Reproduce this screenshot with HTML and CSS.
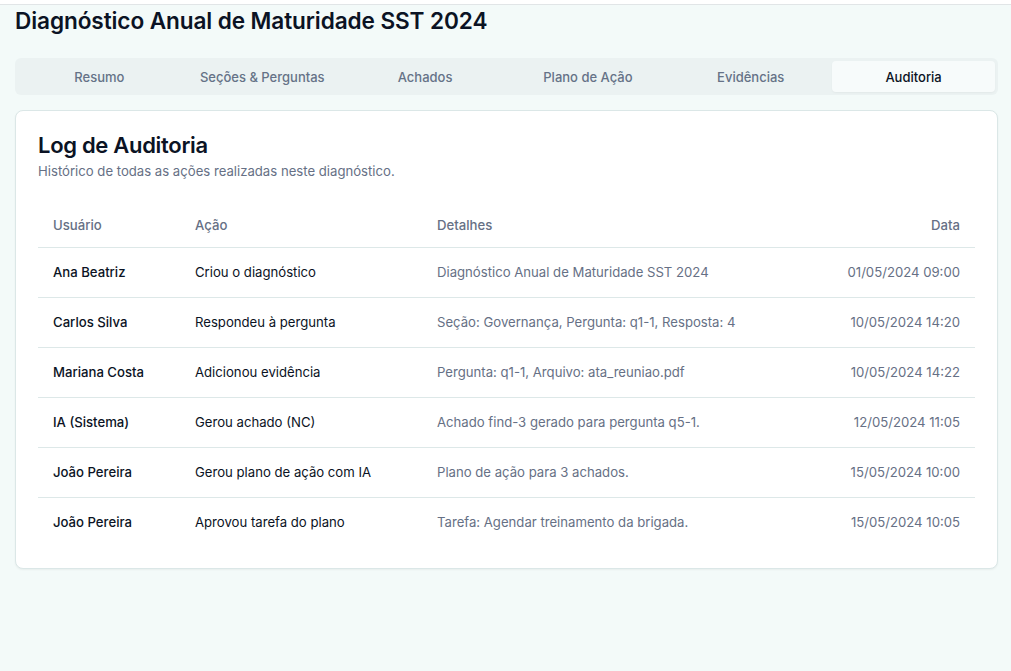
FILE: index.html
```html
<!DOCTYPE html>
<html lang="pt-BR">
<head>
<meta charset="utf-8">
<title>Log de Auditoria</title>
<link rel="stylesheet" href="styles.css">
</head>
<body>
<div class="topbar"></div>
<main class="page">
  <h1 class="page-title">Diagnóstico Anual de Maturidade SST 2024</h1>
  <nav class="tabs">
    <div class="tab">Resumo</div>
    <div class="tab">Seções &amp; Perguntas</div>
    <div class="tab">Achados</div>
    <div class="tab">Plano de Ação</div>
    <div class="tab">Evidências</div>
    <div class="tab active">Auditoria</div>
  </nav>
  <section class="card">
    <div class="card-header">
      <h2 class="card-title">Log de Auditoria</h2>
      <p class="card-desc">Histórico de todas as ações realizadas neste diagnóstico.</p>
    </div>
    <div class="card-content">
      <table class="log">
        <thead>
          <tr>
            <th class="c-user">Usuário</th>
            <th class="c-action">Ação</th>
            <th class="c-details">Detalhes</th>
            <th class="c-date">Data</th>
          </tr>
        </thead>
        <tbody>
          <tr>
            <td class="c-user">Ana Beatriz</td>
            <td class="c-action">Criou o diagnóstico</td>
            <td class="c-details">Diagnóstico Anual de Maturidade SST 2024</td>
            <td class="c-date">01/05/2024 09:00</td>
          </tr>
          <tr>
            <td class="c-user">Carlos Silva</td>
            <td class="c-action">Respondeu à pergunta</td>
            <td class="c-details">Seção: Governança, Pergunta: q1-1, Resposta: 4</td>
            <td class="c-date">10/05/2024 14:20</td>
          </tr>
          <tr>
            <td class="c-user">Mariana Costa</td>
            <td class="c-action">Adicionou evidência</td>
            <td class="c-details">Pergunta: q1-1, Arquivo: ata_reuniao.pdf</td>
            <td class="c-date">10/05/2024 14:22</td>
          </tr>
          <tr>
            <td class="c-user">IA (Sistema)</td>
            <td class="c-action">Gerou achado (NC)</td>
            <td class="c-details">Achado find-3 gerado para pergunta q5-1.</td>
            <td class="c-date">12/05/2024 11:05</td>
          </tr>
          <tr>
            <td class="c-user">João Pereira</td>
            <td class="c-action">Gerou plano de ação com IA</td>
            <td class="c-details">Plano de ação para 3 achados.</td>
            <td class="c-date">15/05/2024 10:00</td>
          </tr>
          <tr>
            <td class="c-user">João Pereira</td>
            <td class="c-action">Aprovou tarefa do plano</td>
            <td class="c-details">Tarefa: Agendar treinamento da brigada.</td>
            <td class="c-date">15/05/2024 10:05</td>
          </tr>
        </tbody>
      </table>
    </div>
  </section>
</main>
</body>
</html>
```

FILE: styles.css
```css
* { box-sizing: border-box; }
html, body { margin: 0; padding: 0; }
body {
  background: #f3faf9;
  font-family: Inter, "Noto Sans", sans-serif;
  color: #0b1324;
  min-height: 671px;
}
.topbar {
  height: 5px;
  background: #ffffff;
  border-bottom: 1px solid #e1e5e7;
}
.page {
  padding: 0 13px 0 15px;
}
.page-title {
  margin: 0;
  padding-top: 2px;
  font-size: 22.6px;
  line-height: 28px;
  font-weight: 600;
  letter-spacing: -0.1px;
  color: #0b1324;
}
.tabs {
  margin-top: 23px;
  display: grid;
  grid-template-columns: repeat(6, 1fr);
  background: #ebf2f2;
  border-radius: 6px;
  padding: 3px;
  height: 37px;
}
.tab {
  display: flex;
  align-items: center;
  justify-content: center;
  font-size: 13px;
  font-weight: 500;
  color: #657287;
  border-radius: 4px;
}
.tab.active {
  background: #f7fbfb;
  color: #0b1324;
  box-shadow: 0 1px 2px rgba(0,0,0,0.04);
}
.card {
  margin-top: 15px;
  background: #ffffff;
  border: 1px solid #dbe7e7;
  border-radius: 8px;
  box-shadow: 0 1px 2px rgba(0,0,0,0.05);
}
.card-header {
  padding: 21px 22px 20px;
}
.card-title {
  margin: 0;
  font-size: 22px;
  line-height: 26px;
  font-weight: 600;
  letter-spacing: -0.3px;
  color: #0b1324;
}
.card-desc {
  margin: 3px 0 0;
  font-size: 13.15px;
  line-height: 20px;
  color: #667085;
}
.card-content {
  padding: 0 22px 21px;
}
.log {
  width: 100%;
  border-collapse: collapse;
  font-size: 13.15px;
}
.log th {
  text-align: left;
  font-weight: 500;
  color: #667085;
  height: 46px;
  padding: 3px 15px 0;
  border-bottom: 1px solid #dde8e8;
}
.log td {
  padding: 15px;
  line-height: 19px;
  border-bottom: 1px solid #dde8e8;
}
.log tbody tr:last-child td { border-bottom: none; }
.log .c-user { width: 142px; }
.log .c-action { width: 242px; }
.log td.c-user { font-weight: 500; color: #0b1324; }
.log td.c-action { color: #0b1324; }
.log td.c-details { color: #667085; }
.log .c-date { text-align: right; }
.log td.c-date { color: #667085; }
```
